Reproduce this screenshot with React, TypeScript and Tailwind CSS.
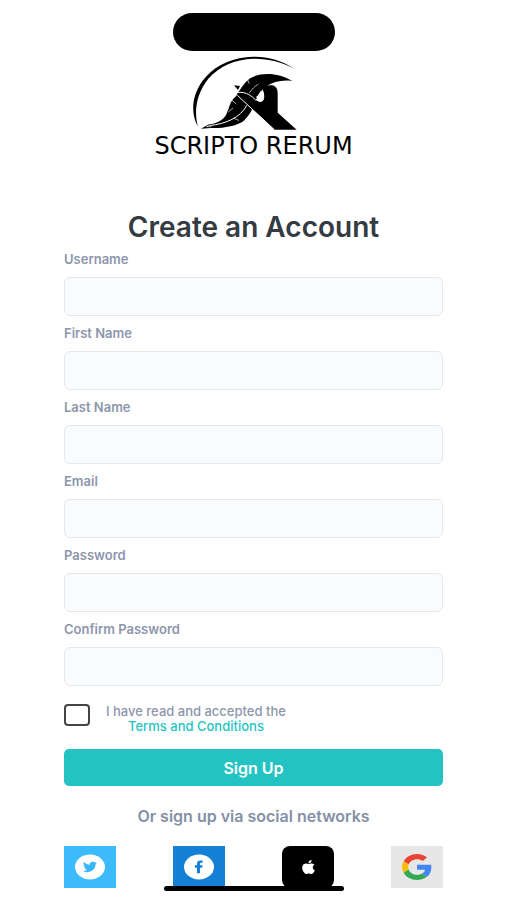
import type { ReactNode } from "react";

const fields = [
  { id: "username", label: "Username", type: "text" },
  { id: "first-name", label: "First Name", type: "text" },
  { id: "last-name", label: "Last Name", type: "text" },
  { id: "email", label: "Email", type: "email" },
  { id: "password", label: "Password", type: "password" },
  { id: "confirm-password", label: "Confirm Password", type: "password" },
];

function QuillLogo() {
  return (
    <svg viewBox="180 162 381 228" className="h-[76px] w-[127px]" aria-hidden="true">
      <path d="M493 203C456 178 412 166 370 167C312 168 262 189 228 227C187 272 179 330 203 376C191 326 201 276 235 233C269 195 314 175 370 173C412 172 456 183 493 203Z" />
      <path d="M487 240C448 216 395 211 360 232C342 246 330 266 318 286C298 302 300 318 292 332C286 352 266 368 236 370L213 383L242 381C284 382 318 374 338 362C360 344 372 316 380 292C392 262 430 232 487 240Z" />
      <path d="M312 253L330 255L324 267Z" />
      <path d="M324 272C350 272 366 286 378 298C392 306 402 302 402 286C402 276 400 272 398 264C402 253 412 252 426 253C438 255 443 264 443 276V335L500 386H433L322 283Z" />
      <path d="M324 274C350 272 366 286 378 298M322 283L433 386" fill="none" stroke="#fff" strokeWidth="3" />
      <path d="M376 289C384 286 388 278 392 270L401 274C405 290 402 302 392 303C384 303 378 296 376 289Z" fill="#fff" />
      <path d="M372 286L382 291L377 295Z" />
      <g fill="none" stroke="#fff" strokeWidth="3" strokeLinecap="round">
        <path d="M238 374C290 368 330 350 350 314" />
        <path d="M358 276C366 264 374 256 384 250" strokeWidth="2" />
        <path d="M353 236L357 247M304 296L318 308M296 332L308 322M312 352L326 358" strokeWidth="2" />
      </g>
      <path d="M229 377L240 371L243 377Z" stroke="#fff" strokeWidth="2" />
    </svg>
  );
}

function TwitterIcon() {
  return (
    <svg viewBox="0 0 30 26" className="h-[26px] w-[30px]" aria-hidden="true">
      <ellipse cx="15" cy="13" rx="15" ry="12.5" fill="#fff" />
      <path
        transform="translate(8 6.4) scale(.58 .54)"
        fill="#38b6f8"
        d="M23.95 4.57a10 10 0 0 1-2.82.77 4.96 4.96 0 0 0 2.16-2.72c-.95.55-2 .95-3.13 1.18a4.92 4.92 0 0 0-8.38 4.48C7.69 8.09 4.07 6.13 1.64 3.16a4.92 4.92 0 0 0 1.52 6.57 4.9 4.9 0 0 1-2.23-.61v.06a4.92 4.92 0 0 0 3.95 4.83 5 5 0 0 1-2.21.08 4.94 4.94 0 0 0 4.6 3.42A9.87 9.87 0 0 1 0 19.54a14 14 0 0 0 7.55 2.21c9.05 0 14-7.5 14-13.98l-.02-.64a10 10 0 0 0 2.42-2.56Z"
      />
    </svg>
  );
}

function FacebookIcon() {
  return (
    <svg viewBox="0 0 30 26" className="h-[26px] w-[30px]" aria-hidden="true">
      <ellipse cx="15" cy="13" rx="15" ry="12.5" fill="#fff" />
      <path
        fill="#1580d8"
        d="M13 19.2V13.7H10.8V11.2H13V9.6C13 7.5 14.4 6.4 16.5 6.4H18.6V8.8H17.3C16.3 8.8 16 9.2 16 9.9V11.2H18.6L18.2 13.7H16V19.2Z"
      />
    </svg>
  );
}

function AppleIcon() {
  return (
    <svg viewBox="2 0 20 24" preserveAspectRatio="none" className="h-[14px] w-[13px]" aria-hidden="true">
      <path
        fill="#fff"
        d="M12.15 6.9c-.95 0-2.42-1.08-3.96-1.04-2.04.03-3.91 1.18-4.96 3.01-2.12 3.68-.55 9.1 1.52 12.09 1.01 1.45 2.21 3.09 3.79 3.04 1.52-.07 2.09-.99 3.94-.99 1.83 0 2.35.99 3.96.95 1.64-.03 2.68-1.48 3.68-2.95 1.16-1.69 1.64-3.32 1.66-3.4-.04-.02-3.18-1.22-3.22-4.86-.03-3.04 2.48-4.49 2.6-4.56-1.43-2.09-3.62-2.32-4.39-2.38-2-.15-3.68 1.1-4.62 1.1ZM15.53 3.83c.84-1.01 1.4-2.43 1.25-3.83-1.21.05-2.66.8-3.53 1.82-.78.9-1.46 2.34-1.27 3.71 1.34.1 2.71-.69 3.55-1.7Z"
      />
    </svg>
  );
}

function GoogleIcon() {
  return (
    <svg viewBox="0 0 48 48" preserveAspectRatio="none" className="h-[26px] w-[30px]" aria-hidden="true">
      <path fill="#ea4335" d="M24 9.5c3.54 0 6.71 1.22 9.21 3.6l6.85-6.85C35.9 2.38 30.47 0 24 0 14.62 0 6.51 5.38 2.56 13.22l7.98 6.19C12.43 13.72 17.74 9.5 24 9.5z" />
      <path fill="#4285f4" d="M46.98 24.55c0-1.57-.15-3.09-.38-4.55H24v9.02h12.94c-.58 2.96-2.26 5.48-4.78 7.18l7.73 6c4.51-4.18 7.09-10.36 7.09-17.65z" />
      <path fill="#fbbc05" d="M10.53 28.59c-.48-1.45-.76-2.99-.76-4.59s.27-3.14.76-4.59l-7.98-6.19C.92 16.46 0 20.12 0 24c0 3.88.92 7.54 2.56 10.78l7.97-6.19z" />
      <path fill="#34a853" d="M24 48c6.48 0 11.93-2.13 15.89-5.81l-7.73-6c-2.15 1.45-4.92 2.3-8.16 2.3-6.26 0-11.57-4.22-13.47-9.91l-7.98 6.19C6.51 42.62 14.62 48 24 48z" />
    </svg>
  );
}

function SocialButton({ label, className, children }: { label: string; className: string; children: ReactNode }) {
  return (
    <button
      type="button"
      aria-label={label}
      className={`flex h-[42px] w-[52px] items-center justify-center ${className}`}
    >
      {children}
    </button>
  );
}

export default function App() {
  return (
    <div className="relative min-h-screen bg-white font-['Inter',Roboto,sans-serif]">
      <header className="flex flex-col items-center pt-[13px]">
        <div className="h-[38px] w-[162px] rounded-full bg-black" />
        <div className="mt-1">
          <QuillLogo />
        </div>
        <p className="font-['DejaVu_Sans',sans-serif] text-2xl leading-[30px] text-black">SCRIPTO RERUM</p>
      </header>

      <main className="px-16 pt-12">
        <h1 className="text-center text-[28px] leading-9 font-semibold text-[#343b42]">Create an Account</h1>

        <form className="mt-1" onSubmit={(e) => e.preventDefault()}>
          <div className="flex flex-col gap-[7px]">
            {fields.map((f) => (
              <div key={f.id} className="flex flex-col gap-2">
                <label htmlFor={f.id} className="text-[13px] leading-5 font-semibold text-[#8d96ac]">
                  {f.label}
                </label>
                <input
                  id={f.id}
                  type={f.type}
                  className="h-[39px] w-full rounded-md border border-[#e4e8ea] bg-[#fafbfd] px-3 text-sm text-[#343b42] outline-none"
                />
              </div>
            ))}
          </div>

          <div className="mt-[18px] flex items-start gap-4">
            <input
              id="terms"
              type="checkbox"
              aria-label="I have read and accepted the Terms and Conditions"
              className="h-[22px] w-[26px] appearance-none rounded border-2 border-[#444444] bg-white checked:bg-[#24c3c3]"
            />
            <div className="text-center text-[13px] leading-[15px] font-medium text-[#8d96ac]">
              <label htmlFor="terms" className="block">
                I have read and accepted the
              </label>
              <a href="#terms" className="block text-[#24c3c3]">
                Terms and Conditions
              </a>
            </div>
          </div>

          <button
            type="submit"
            className="mt-[15px] block h-[37px] w-full rounded-[5px] bg-[#24c3c3] text-base font-semibold text-white"
          >
            Sign Up
          </button>
        </form>

        <p className="mt-5 text-center text-base leading-5 font-semibold text-[#8590a6]">
          Or sign up via social networks
        </p>

        <div className="mt-5 flex justify-between pb-3">
          <SocialButton label="Sign up with Twitter" className="bg-[#3bbafc]">
            <TwitterIcon />
          </SocialButton>
          <SocialButton label="Sign up with Facebook" className="bg-[#1580d8]">
            <FacebookIcon />
          </SocialButton>
          <SocialButton label="Sign up with Apple" className="rounded-lg bg-black">
            <AppleIcon />
          </SocialButton>
          <SocialButton label="Sign up with Google" className="bg-[#e7e7e8]">
            <GoogleIcon />
          </SocialButton>
        </div>
      </main>

      <div className="absolute bottom-[9px] left-1/2 h-[5px] w-[180px] -translate-x-1/2 rounded-full bg-black" />
    </div>
  );
}
